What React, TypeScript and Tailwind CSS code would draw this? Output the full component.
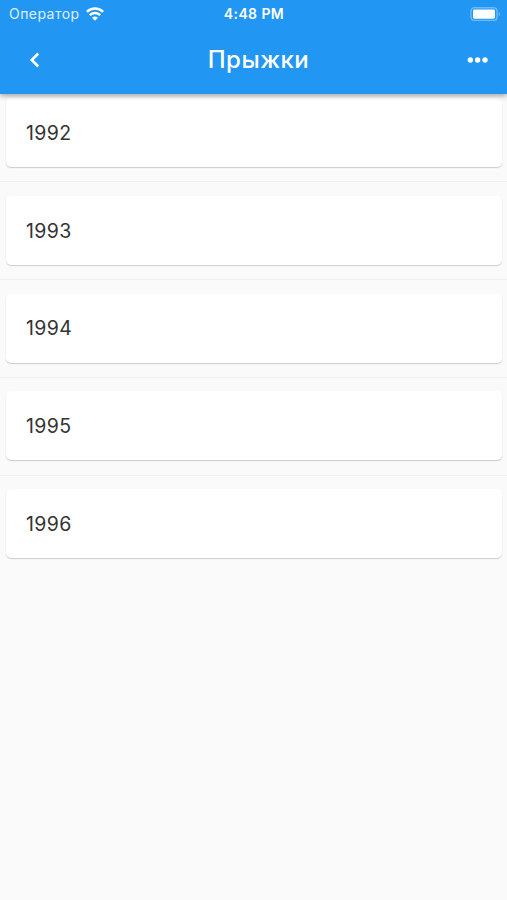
import { Fragment } from "react";

const YEARS = ["1992", "1993", "1994", "1995", "1996"];

function WifiIcon() {
  return (
    <svg width="18" height="14" viewBox="0 0 18 14" fill="none" stroke="white" strokeWidth="2.5">
      <path d="M0.9 4.8a11.5 11.5 0 0 1 16.2 0" />
      <path d="M3.7 8.1a7.5 7.5 0 0 1 10.6 0" />
      <path d="M9 13.7 6 10.7a4.2 4.2 0 0 1 6 0Z" fill="white" stroke="none" />
    </svg>
  );
}

function BatteryIcon() {
  return (
    <svg width="31" height="14" viewBox="0 0 31 14" fill="none">
      <rect x="1" y="0.8" width="26" height="12.6" rx="3.2" stroke="white" strokeOpacity="0.35" strokeWidth="1.4" />
      <rect x="3" y="2.5" width="22" height="9.2" rx="1.4" fill="white" />
      <path d="M28.6 4.9c1.8 0.6 1.8 3.8 0 4.4Z" fill="white" fillOpacity="0.35" />
    </svg>
  );
}

function StatusBar() {
  return (
    <div className="grid h-[27px] grid-cols-[1fr_auto_1fr] items-center pl-[9px] pr-[6px]">
      <div className="flex items-center gap-[6px]">
        <span className="text-[14px] leading-none tracking-[0.45px] text-white/85">Оператор</span>
        <WifiIcon />
      </div>
      <span className="-ml-[2px] text-[14px] font-semibold leading-none tracking-[0.4px]">4:48 PM</span>
      <div className="flex justify-end">
        <BatteryIcon />
      </div>
    </div>
  );
}

function NavBar() {
  return (
    <div className="grid h-[65px] grid-cols-[1fr_auto_1fr] items-center pl-[29px] pr-[19px]">
      <button type="button" aria-label="Назад" className="justify-self-start">
        <svg width="12" height="16" viewBox="0 0 12 16" fill="none" stroke="white" strokeWidth="2.7">
          <path d="M9.3 1.5 2.8 8l6.5 6.5" />
        </svg>
      </button>
      <h1 className="text-[24px] font-medium leading-none tracking-[0.5px]">Прыжки</h1>
      <button type="button" aria-label="Меню" className="justify-self-end">
        <svg width="21" height="6" viewBox="0 0 21 6" fill="white">
          <circle cx="3.3" cy="3" r="2.7" />
          <circle cx="10.6" cy="3" r="2.7" />
          <circle cx="18" cy="3" r="2.7" />
        </svg>
      </button>
    </div>
  );
}

export default function App() {
  return (
    <div className="flex h-[900px] w-full flex-col overflow-hidden bg-[#fafafa] font-['Inter','Liberation_Sans',sans-serif]">
      <header className="relative z-10 h-[94px] shrink-0 bg-[#2196f3] text-white shadow-[0_2px_5px_rgba(0,0,0,0.35)]">
        <StatusBar />
        <NavBar />
      </header>
      <main className="flex flex-col pt-[4px]">
        {YEARS.map((year, i) => (
          <Fragment key={year}>
            {i > 0 && (
              <div className="flex h-[28.75px] items-center pt-px">
                <div className="h-px w-full bg-[#f0f0f0]" />
              </div>
            )}
            <div className="ml-[6px] mr-[5px] flex h-[69px] items-center rounded-[5px] bg-white pl-[20px] pt-[2px] shadow-[0_1px_1px_rgba(0,0,0,0.14),0_1px_2px_rgba(0,0,0,0.06)]">
              <span className="text-[19.5px] leading-none tracking-[0.4px] text-[#333]">{year}</span>
            </div>
          </Fragment>
        ))}
      </main>
    </div>
  );
}
